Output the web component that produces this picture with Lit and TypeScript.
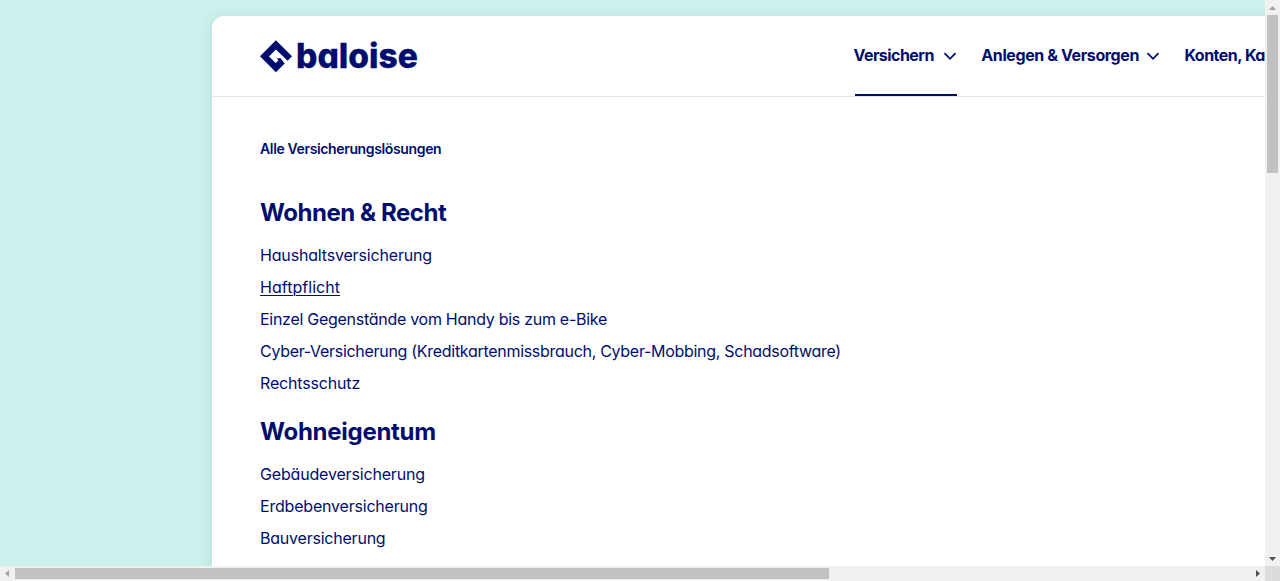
import { LitElement, html, css } from "lit";
import { customElement } from "lit/decorators.js";

type Entry = { label: string; spacing: number; active?: boolean };
type Group = { title: string; spacing: number; entries: Entry[] };

const NAV: Entry[] = [
  { label: "Versichern", spacing: -0.55, active: true },
  { label: "Anlegen & Versorgen", spacing: -0.4 },
  { label: "Konten, Ka", spacing: -0.5 },
];

const GROUPS: Group[] = [
  {
    title: "Wohnen & Recht",
    spacing: -0.46,
    entries: [
      { label: "Haushaltsversicherung", spacing: -0.17 },
      { label: "Haftpflicht", spacing: 0.04, active: true },
      { label: "Einzel Gegenstände vom Handy bis zum e-Bike", spacing: -0.28 },
      { label: "Cyber-Versicherung (Kreditkartenmissbrauch, Cyber-Mobbing, Schadsoftware)", spacing: -0.294 },
      { label: "Rechtsschutz", spacing: -0.17 },
    ],
  },
  {
    title: "Wohneigentum",
    spacing: -0.27,
    entries: [
      { label: "Gebäudeversicherung", spacing: -0.17 },
      { label: "Erdbebenversicherung", spacing: -0.2 },
      { label: "Bauversicherung", spacing: -0.22 },
    ],
  },
];

@customElement("app-root")
export class AppRoot extends LitElement {
  static styles = css`
    :host {
      display: grid;
      grid-template: 566px 15px / 1265px 15px;
      width: 1280px;
      height: 581px;
      overflow: hidden;
      color: #000d6e;
      font-family: Inter, "Liberation Sans", sans-serif;
      font-feature-settings: "cv11" 1;
    }
    .view { background: #cbf2ec; overflow: hidden; padding: 16px 0 0 212px; }
    .card {
      width: 1400px;
      height: 700px;
      background: #fff;
      border-radius: 12px 0 0 0;
      box-shadow: 0 2px 14px rgba(0, 60, 40, 0.13);
    }
    .head {
      display: flex;
      height: 80px;
      border-bottom: 1px solid #e5e5e8;
      padding-left: 48px;
    }
    .logo { width: 180px; height: 80px; flex: none; overflow: visible; }
    .logo text { font-size: 34px; font-weight: 800; stroke: #000d6e; stroke-width: 0.3; }
    .nav { display: flex; gap: 24px; margin-left: 413.5px; }
    .tab { display: flex; flex: none; height: 80px; }
    .tab span { font-size: 16px; font-weight: 700; line-height: 79px; white-space: nowrap; }
    .tab svg { width: 14px; height: 80px; margin-left: 7.5px; }
    .tab.active svg { margin-left: 9.5px; }
    .tab.active { background: linear-gradient(#000d6e, #000d6e) 1.5px 78px / 102px 2px no-repeat; }
    .body { padding: 40px 48px; }
    .all { font-size: 14px; font-weight: 600; line-height: 24px; height: 24px; letter-spacing: -0.36px; }
    h2 { font-size: 24px; font-weight: 700; line-height: 32px; margin: 36px 0 11px; }
    .group + .group h2 { margin-top: 16px; }
    ul { list-style: none; margin: 0; padding: 0; }
    li { height: 32px; line-height: 31px; font-size: 16px; white-space: nowrap; }
    .current { text-decoration: underline; text-underline-offset: 2px; text-decoration-thickness: 1px; }
    .vbar, .hbar { display: flex; background: #f1f1f1; }
    .vbar { flex-direction: column; justify-content: space-between; align-items: center; }
    .hbar { justify-content: space-between; align-items: center; }
    .vthumb { width: 11px; height: 158px; background: #c1c1c1; margin-bottom: auto; }
    .hthumb { height: 11px; width: 814px; background: #c1c1c1; margin-right: auto; }
    .arrow { width: 15px; height: 15px; flex: none; }
    .corner { background: #dcdcdc; }
  `;

  arrow(points: string, color: string) {
    return html`<svg class="arrow" viewBox="0 0 15 15"><polygon points=${points} fill=${color} /></svg>`;
  }

  render() {
    return html`
      <main class="view">
        <section class="card">
          <header class="head">
            <svg class="logo" viewBox="0 0 180 80" fill="#000d6e">
              <path d="M15.9 24.3 32 40.3 27.6 44.7 15.9 33.6 9 40.4 15.7 47.1 18.5 44.3 16.7 42.5 20.4 42 24.7 47.5 15.9 56.2 0 40.3Z" />
              <text x="36" y="51.5" textLength="122" lengthAdjust="spacingAndGlyphs">baloise</text>
            </svg>
            <nav class="nav">
              ${NAV.map((n) => html`
                <div class="tab ${n.active ? "active" : ""}">
                  <span style="letter-spacing:${n.spacing}px">${n.label}</span>
                  <svg viewBox="0 0 14 80"><path d="M1.5 37.2 7 42.8 12.5 37.2" fill="none" stroke="#000d6e" stroke-width="1.8" /></svg>
                </div>`)}
            </nav>
          </header>
          <div class="body">
            <div class="all">Alle Versicherungslösungen</div>
            ${GROUPS.map((g) => html`
              <div class="group">
                <h2 style="letter-spacing:${g.spacing}px">${g.title}</h2>
                <ul>
                  ${g.entries.map((e) => html`<li><span class=${e.active ? "current" : ""} style="letter-spacing:${e.spacing}px">${e.label}</span></li>`)}
                </ul>
              </div>`)}
          </div>
        </section>
      </main>
      <div class="vbar">
        ${this.arrow("4,10 11,10 7.5,6", "#a3a3a3")}
        <div class="vthumb"></div>
        ${this.arrow("4,6 11,6 7.5,10", "#505050")}
      </div>
      <div class="hbar">
        ${this.arrow("9,4 9,11 5,7.5", "#a3a3a3")}
        <div class="hthumb"></div>
        ${this.arrow("6,4 6,11 10,7.5", "#505050")}
      </div>
      <div class="corner"></div>
    `;
  }
}
